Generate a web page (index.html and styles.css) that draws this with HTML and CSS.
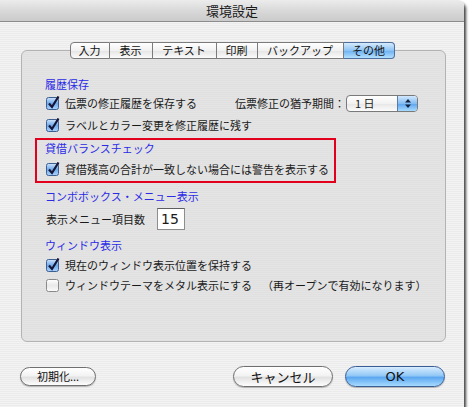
FILE: index.html
```html
<!DOCTYPE html>
<html lang="ja">

<head>
    <meta charset="UTF-8">
    <title>環境設定</title>
    <link rel="stylesheet" href="styles.css">
</head>

<body>
    <svg class="defs" width="0" height="0">
        <defs>
            <linearGradient id="cbOn" x1="0" y1="0" x2="0" y2="1">
                <stop offset="0" stop-color="#cfe4fb" />
                <stop offset="0.5" stop-color="#6fa9ea" />
                <stop offset="1" stop-color="#a9d4ff" />
            </linearGradient>
            <linearGradient id="cbOff" x1="0" y1="0" x2="0" y2="1">
                <stop offset="0" stop-color="#ffffff" />
                <stop offset="0.5" stop-color="#e9e9e9" />
                <stop offset="1" stop-color="#fbfbfb" />
            </linearGradient>
        </defs>
    </svg>

    <div class="window">
        <div class="titlebar">環境設定</div>

        <div class="content">
            <div class="tabs">
                <span class="tab">入力</span>
                <span class="tab">表示</span>
                <span class="tab">テキスト</span>
                <span class="tab">印刷</span>
                <span class="tab">バックアップ</span>
                <span class="tab selected">その他</span>
            </div>

            <div class="groupbox">
                <!-- 履歴保存 -->
                <div class="heading">履歴保存</div>
                <div class="row">
                    <svg class="cb" viewBox="0 0 14 14"><rect x="0.5" y="1.5" width="12" height="12" rx="2" fill="url(#cbOn)" stroke="#3d5f92" /><path d="M3 7.5 L6 11 L12.5 0.5" stroke="#151538" stroke-width="2.2" fill="none" /></svg>
                    <span>伝票の修正履歴を保存する</span>
                    <span class="grace">
                        <span>伝票修正の猶予期間：</span>
                        <span class="popup">
                            <span class="popup-label">1 日</span>
                            <span class="popup-arrows">
                                <svg width="8" height="11" viewBox="0 0 8 11"><path d="M1 4.5 L4 1 L7 4.5Z M1 6.5 L4 10 L7 6.5Z" fill="#14233f" /></svg>
                            </span>
                        </span>
                    </span>
                </div>
                <div class="row">
                    <svg class="cb" viewBox="0 0 14 14"><rect x="0.5" y="1.5" width="12" height="12" rx="2" fill="url(#cbOn)" stroke="#3d5f92" /><path d="M3 7.5 L6 11 L12.5 0.5" stroke="#151538" stroke-width="2.2" fill="none" /></svg>
                    <span>ラベルとカラー変更を修正履歴に残す</span>
                </div>

                <!-- 貸借バランスチェック -->
                <div class="highlight">
                    <div class="heading">貸借バランスチェック</div>
                    <div class="row">
                        <svg class="cb" viewBox="0 0 14 14"><rect x="0.5" y="1.5" width="12" height="12" rx="2" fill="url(#cbOn)" stroke="#3d5f92" /><path d="M3 7.5 L6 11 L12.5 0.5" stroke="#151538" stroke-width="2.2" fill="none" /></svg>
                        <span>貸借残高の合計が一致しない場合には警告を表示する</span>
                    </div>
                </div>

                <!-- コンボボックス -->
                <div class="heading combo-heading">コンボボックス・メニュー表示</div>
                <div class="row menu-row">
                    <span>表示メニュー項目数</span>
                    <span class="numbox">15</span>
                </div>

                <!-- ウィンドウ表示 -->
                <div class="heading window-heading">ウィンドウ表示</div>
                <div class="row short first-short">
                    <svg class="cb" viewBox="0 0 14 14"><rect x="0.5" y="1.5" width="12" height="12" rx="2" fill="url(#cbOn)" stroke="#3d5f92" /><path d="M3 7.5 L6 11 L12.5 0.5" stroke="#151538" stroke-width="2.2" fill="none" /></svg>
                    <span>現在のウィンドウ表示位置を保持する</span>
                </div>
                <div class="row short">
                    <svg class="cb" viewBox="0 0 14 14"><rect x="0.5" y="1.5" width="12" height="12" rx="2" fill="url(#cbOff)" stroke="#8a8a8a" /></svg>
                    <span>ウィンドウテーマをメタル表示にする</span>
                    <span class="note">（再オープンで有効になります）</span>
                </div>
            </div>

            <div class="buttons">
                <button class="btn small">初期化...</button>
                <span class="spacer"></span>
                <button class="btn">キャンセル</button>
                <button class="btn default">OK</button>
            </div>
        </div>
    </div>
</body>

</html>
```

FILE: styles.css
```css
body {
    margin: 0;
    padding: 0;
    background-color: #ffffff;
    font-family: "Noto Sans CJK JP", sans-serif;
    font-size: 11px;
    color: #1a1a1a;
}

.defs {
    position: absolute;
}

.window {
    width: 464px;
    height: 407px;
    border-top-right-radius: 6px;
    overflow: hidden;
    box-shadow: 2px 3px 3px rgba(0, 0, 0, 0.75);
    background: repeating-linear-gradient(#f3f3f3 0px, #f3f3f3 1px, #ebebeb 1px, #ebebeb 2px);
}

.titlebar {
    height: 21px;
    line-height: 21px;
    text-align: center;
    font-size: 13px;
    color: #1a1a1a;
    background: linear-gradient(#ececec, #d9d9d9 50%, #cbcbcb);
    border-bottom: 1px solid #8c8c8c;
}

.content {
    display: flex;
    flex-direction: column;
}

/* tabs */
.tabs {
    display: flex;
    justify-content: center;
    margin-top: 20px;
    margin-bottom: -9px;
    position: relative;
    z-index: 1;
}

.tab {
    height: 15px;
    line-height: 15px;
    text-align: center;
    border: 1px solid #7b7b7b;
    border-left: none;
    background: linear-gradient(#ffffff, #f1f1f1 50%, #e4e4e4 51%, #fbfbfb);
    color: #111111;
}

.tab:nth-child(1) { width: 38px; border-left: 1px solid #7b7b7b; border-radius: 4px 0 0 4px; }
.tab:nth-child(2) { width: 42px; }
.tab:nth-child(3) { width: 63px; }
.tab:nth-child(4) { width: 40px; }
.tab:nth-child(5) { width: 85px; }
.tab:nth-child(6) { width: 50px; border-radius: 0 4px 4px 0; }

.tab.selected {
    background: linear-gradient(#d6eafd, #8ec4f5 50%, #6aaff0 51%, #b4e0ff);
    border-color: #4e6e9e;
}

/* group box */
.groupbox {
    margin-left: 21px;
    width: 400px;
    height: 265px;
    padding: 25px 0 0 23px;
    border: 1px solid #b3b3b3;
    border-radius: 6px;
    background: repeating-linear-gradient(#e4e4e4 0px, #e4e4e4 1px, #e0e0e0 1px, #e0e0e0 2px);
}

.heading {
    height: 16px;
    line-height: 16px;
    color: #2b2be6;
}

.row {
    display: flex;
    align-items: center;
    height: 22px;
    padding-left: 1px;
}

.row.short {
    height: 20px;
}

.first-short {
    margin-top: 2px;
}

.cb {
    width: 14px;
    height: 14px;
    margin-right: 5px;
    flex: none;
}

.grace {
    display: flex;
    align-items: center;
    margin-left: auto;
    margin-right: 27px;
}

.popup {
    display: flex;
    width: 70px;
    height: 15px;
    border: 1px solid #7a7a7a;
    border-radius: 4px;
    overflow: hidden;
    margin-left: 1px;
    background: linear-gradient(#ffffff, #f2f2f2 50%, #e6e6e6 51%, #fcfcfc);
}

.popup-label {
    flex: 1;
    padding-left: 8px;
    line-height: 15px;
}

.popup-arrows {
    width: 19px;
    display: flex;
    align-items: center;
    justify-content: center;
    border-left: 1px solid #5b7aa8;
    background: linear-gradient(#d2e8fd, #84bdf3 50%, #5aa3ee 51%, #a8dbff);
}

.highlight {
    margin: 2px 0 0 -10px;
    width: 289px;
    padding: 0 0 1px 8px;
    border: 2px solid #e2001d;
}

.highlight .row {
    margin-top: 2px;
}

.combo-heading {
    margin-top: 5px;
}

.menu-row {
    height: 24px;
    margin-top: 3px;
}

.numbox {
    width: 23px;
    height: 20px;
    line-height: 20px;
    margin-left: 12px;
    padding-left: 3px;
    font-size: 14px;
    font-family: "DejaVu Sans", sans-serif;
    background: #ffffff;
    border: 1px solid #8d8d8d;
    border-top-color: #5e5e5e;
}

.window-heading {
    margin-top: 6px;
}

.note {
    margin-left: 10px;
}

/* buttons */
.buttons {
    display: flex;
    align-items: center;
    margin-top: 24px;
    padding: 0 19px 0 20px;
}

.spacer {
    flex: 1;
}

.btn {
    height: 21px;
    width: 100px;
    padding: 0;
    font-family: "Noto Sans CJK JP", sans-serif;
    font-size: 13px;
    line-height: 19px;
    color: #111111;
    border: 1px solid #6f6f6f;
    border-radius: 11px;
    background: linear-gradient(#ffffff, #f3f3f3 45%, #e2e2e2 55%, #fdfdfd);
    box-shadow: 0 1px 1px rgba(0, 0, 0, 0.25);
}

.btn.small {
    width: 76px;
    height: 19px;
    font-size: 11px;
    line-height: 17px;
}

.btn.default {
    margin-left: 12px;
    font-family: "DejaVu Sans", sans-serif;
    font-size: 13px;
    border-color: #3b5d95;
    background: linear-gradient(#d8ecfe, #92c8f6 45%, #5da7f0 55%, #a6dbff);
}
```
